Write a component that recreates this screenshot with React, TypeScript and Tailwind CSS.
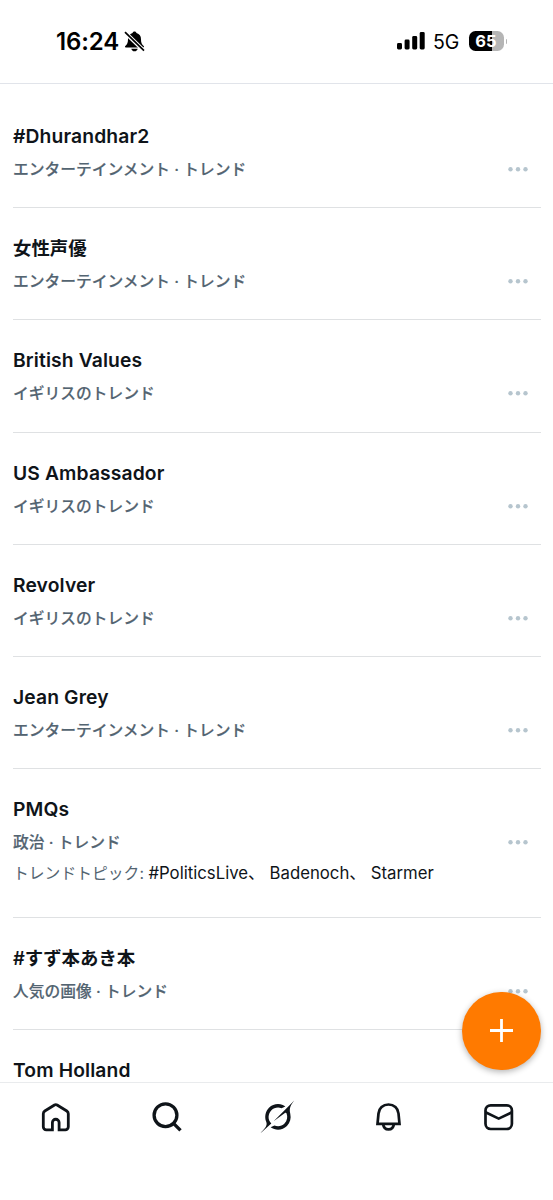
import React from 'react';

type Trend = {
  title: string;
  category?: string;
  related?: string[];
  latin?: boolean;
};

const trends: Trend[] = [
  { title: '#Dhurandhar2', category: 'エンターテインメント · トレンド', latin: true },
  { title: '女性声優', category: 'エンターテインメント · トレンド' },
  { title: 'British Values', category: 'イギリスのトレンド', latin: true },
  { title: 'US Ambassador', category: 'イギリスのトレンド', latin: true },
  { title: 'Revolver', category: 'イギリスのトレンド', latin: true },
  { title: 'Jean Grey', category: 'エンターテインメント · トレンド', latin: true },
  { title: 'PMQs', category: '政治 · トレンド', related: ['#PoliticsLive', 'Badenoch', 'Starmer'], latin: true },
  { title: '#すず本あき本', category: '人気の画像 · トレンド' },
  { title: 'Tom Holland', latin: true },
];

function StatusBar() {
  return (
    <header className="flex h-[84px] shrink-0 items-start border-b border-[#e1e4ea] pl-[56px] pr-[46px] pt-[29px] text-black">
      <div className="flex h-6 items-center">
        <span className="mt-[2px] w-[68px] text-[24px] leading-6 font-semibold tracking-[-0.1px] whitespace-nowrap">16:24</span>
        <svg width="21" height="21" viewBox="0 0 21 21">
          <path d="M10.5 .6c-1 0-1.8.6-2 1.5C5.5 3 4 5.2 4 8.2c0 3.4-.7 5-2.7 6.7-.6.6-.3 1.5.5 1.5h17.4c.8 0 1.1-.9.5-1.5-2-1.7-2.7-3.3-2.7-6.7 0-3-1.5-5.2-4.5-6.1-.2-.9-1-1.5-2-1.5z" />
          <path d="M7.3 17.7h6.4c-.3 1.5-1.5 2.600-3.200 2.600s-2.900-1.100-3.200-2.600z" />
          <path d="M.8 1.200 20 19.800" stroke="#fff" strokeWidth="4" />
          <path d="M1 1.200 20 19.600" stroke="#000" strokeWidth="1.700" />
        </svg>
      </div>
      <div className="ml-auto flex h-6 items-center">
        <svg width="28" height="18" viewBox="0 0 28 18" className="mr-[8px]">
          <rect x="0" y="11" width="5" height="6.500" rx="1.400" />
          <rect x="7.600" y="7.600" width="5" height="9.900" rx="1.400" />
          <rect x="15.200" y="4" width="5" height="13.500" rx="1.400" />
          <rect x="22.700" y="0" width="5" height="17.500" rx="1.400" />
        </svg>
        <span className="mt-[2px] w-[36px] text-[19.5px] leading-6 tracking-[-0.2px]">5G</span>
        <div className="flex h-5 w-[35px] items-center justify-center rounded-[6.5px] bg-linear-to-r from-black from-66% to-[#b5b5b5] to-66%">
          <span className="pr-px text-[16.5px] leading-5 font-bold text-white">65</span>
        </div>
        <div className="ml-[1.5px] h-[5px] w-[1.5px] rounded-r-full bg-[#b5b5b5]" />
      </div>
    </header>
  );
}

function TrendRow({ title, category, related, latin }: Trend) {
  return (
    <li className={`shrink-0 border-b border-[#dfe1e3] pt-[28px] ${related ? 'h-[148.6px]' : 'h-[112.2px]'}`}>
      <h2 className={`leading-6 text-[#0f1419] ${latin ? 'text-[19.3px] tracking-[0.12px] font-[560]' : 'text-[18.4px] font-semibold'}`}>
        {title}
      </h2>
      {category && (
        <div className="mt-[10px] flex h-[22px] items-center justify-between pr-[13px]">
          <p className="pt-[2px] text-[15.75px] leading-[22px] font-medium text-[#536471] [-webkit-text-stroke:0.15px_#536471]">{category}</p>
          <svg width="20" height="6" viewBox="0 0 20 6" fill="#b6c5ce">
            <circle cx="2.500" cy="3.200" r="2.200" />
            <circle cx="10" cy="3.200" r="2.200" />
            <circle cx="17.500" cy="3.200" r="2.200" />
          </svg>
        </div>
      )}
      {related && (
        <p className="mt-[9px] text-[15.8px] leading-[22px] whitespace-nowrap text-[#536471]">
          トレンドトピック: <span className="text-[16.75px] text-[#0f1419]">{related.join('、 ')}</span>
        </p>
      )}
    </li>
  );
}

function BottomNav() {
  return (
    <nav className="flex h-[118px] shrink-0 items-start justify-between border-t border-[#e9ebed] bg-white pt-[16px] pr-[36px] pl-[38px]">
      <svg width="36" height="36" viewBox="0 0 36 36" fill="none" stroke="#0f1419" strokeWidth="2.800">
        <path d="M14.400 30.800H8.300a3 3 0 0 1-3-3V14.800q0-1.800 1.500-2.800l9.700-6a2.500 2.500 0 0 1 2.600 0l9.700 6q1.500 1 1.500 2.800v13a3 3 0 0 1-3 3h-6.200V23.600a3.350 3.350 0 0 0-6.700 0z" />
      </svg>
      <svg width="36" height="36" viewBox="0 0 36 36" fill="none" stroke="#0f1419" strokeWidth="3.300">
        <circle cx="16.500" cy="16.200" r="11.400" />
        <path d="m24.500 24.300 7 7" />
      </svg>
      <svg width="36" height="36" viewBox="-.5 -1.200 35 35" fill="#0f1419">
        <path d="M12.745 20.540l10.970-8.190c.539-.4 1.307-.244 1.564.38 1.349 3.288.746 7.241-1.938 9.955-2.683 2.714-6.417 3.310-9.830 1.954l-3.728 1.745c5.347 3.697 11.840 2.782 15.898-1.324 3.219-3.255 4.216-7.692 3.284-11.693l.008.009c-1.351-5.878.332-8.227 3.782-13.031L33 0l-4.540 4.590v-.014L12.743 20.544m-2.263 1.987c-3.837-3.707-3.175-9.446.1-12.755 2.420-2.449 6.388-3.448 9.852-1.979l3.720-1.737c-.67-.49-1.530-1.017-2.515-1.387-4.455-1.854-9.789-.931-13.410 2.728-3.483 3.523-4.579 8.940-2.697 13.561 1.405 3.454-.899 5.898-3.220 8.364C1.490 30.200.666 31.074 0 32l10.478-9.466" />
      </svg>
      <svg width="36" height="36" viewBox="0 0 36 36" fill="none" stroke="#0f1419" strokeWidth="2.700">
        <path d="M7.500 24.900 8.500 14.500C8.900 9.300 13 5.500 18.500 5.500s9.600 3.800 10 9l1 10.400z" />
        <path d="M13.100 25c.4 3.300 2.600 5.400 5.400 5.400s5-2.100 5.400-5.400" />
      </svg>
      <svg width="36" height="36" viewBox="0 0 36 36" fill="none" stroke="#0f1419" strokeWidth="2.700">
        <rect x="4.500" y="6.300" width="26.400" height="23.700" rx="5.200" />
        <path d="m4.500 13.300 13.200 6.300 13.200-6.300" />
      </svg>
    </nav>
  );
}

export default function App() {
  return (
    <div className="relative flex h-[1200px] w-[553px] flex-col overflow-hidden bg-white font-['Inter','Noto_Sans_CJK_JP',sans-serif]">
      <StatusBar />
      <main className="min-h-0 flex-1 overflow-hidden pt-[12px] pr-[12px] pl-[13px]">
        <ul className="flex flex-col">
          {trends.map((trend) => (
            <TrendRow key={trend.title} {...trend} />
          ))}
        </ul>
      </main>
      <BottomNav />

      {/* Compose button */}
      <button
        type="button"
        className="absolute right-[12.5px] bottom-[130px] flex size-[78.5px] items-center justify-center rounded-full bg-[#ff7a00] shadow-[0_2px_6px_rgba(0,0,0,0.3)]"
      >
        <svg width="23" height="23" viewBox="0 0 23 23" stroke="#fff" strokeWidth="2.800">
          <path d="M11.500 0v23M0 11.500h23" />
        </svg>
      </button>
    </div>
  );
}
